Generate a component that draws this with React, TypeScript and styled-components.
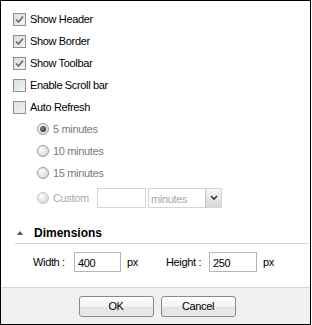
import React, { useState } from 'react';
import styled, { createGlobalStyle } from 'styled-components';

const Global = createGlobalStyle`
	html, body {
		margin: 0;
		padding: 0;
		background: #fff;
	}
	body {
		font-family: 'Liberation Sans', Arial, sans-serif;
		font-size: 11px;
		letter-spacing: -0.35px;
		color: #000;
	}
	* { box-sizing: border-box; }
`;

const Dialog = styled.div`
	width: 311px;
	height: 325px;
	border: 1px solid #000;
	display: flex;
	flex-direction: column;
	background: #fff;
`;

const Body = styled.div`
	padding: 7px 0 0 12px;
	display: flex;
	flex-direction: column;
`;

const Row = styled.label<{ $indent?: number; $h?: number; $muted?: 'gray' | 'light' }>`
	display: flex;
	align-items: center;
	height: ${p => p.$h ?? 22}px;
	padding-left: ${p => p.$indent ?? 0}px;
	color: ${p => (p.$muted === 'gray' ? '#7b7b7b' : p.$muted === 'light' ? '#a8a8a8' : '#000')};
`;

const Box = styled.span`
	width: 13px;
	height: 13px;
	border: 1px solid #8f8f8f;
	background: linear-gradient(135deg, #dcdcdc 0%, #f4f4f4 100%);
	margin-right: 4px;
	display: flex;
	align-items: center;
	justify-content: center;
`;

const Radio = styled.span<{ $on?: boolean; $faded?: boolean }>`
	width: 12px;
	height: 12px;
	border-radius: 50%;
	border: 1px solid ${p => (p.$faded ? '#c4c4c4' : '#9a9a9a')};
	background: radial-gradient(circle at 35% 35%, #ffffff 0%, #d6d6d6 80%);
	margin-right: 4px;
	display: flex;
	align-items: center;
	justify-content: center;
	&::after {
		content: '';
		display: ${p => (p.$on ? 'block' : 'none')};
		width: 6px;
		height: 6px;
		border-radius: 50%;
		background: radial-gradient(circle at 40% 40%, #8a8a8a 0%, #222 90%);
	}
`;

const TextInput = styled.input<{ $w: number }>`
	width: ${p => p.$w}px;
	height: 20px;
	border: 1px solid #b5b5b5;
	padding: 2px 3px 0;
	font: inherit;
	letter-spacing: inherit;
	color: #000;
	outline: none;
	&:disabled {
		background: #fff;
		border-color: #d4d4d4;
	}
`;

const Select = styled.div`
	margin-left: 2px;
	width: 74px;
	height: 20px;
	border: 1px solid #d4d4d4;
	display: flex;
	align-items: stretch;
	color: #a8a8a8;
`;

const SelectText = styled.span`
	flex: 1;
	display: flex;
	align-items: center;
	padding: 2px 0 0 2px;
`;

const SelectBtn = styled.span`
	width: 16px;
	border-left: 1px solid #c8c8c8;
	background: linear-gradient(#f6f6f6, #d8d8d8);
	display: flex;
	align-items: center;
	justify-content: center;
`;

const SectionHead = styled.div`
	margin: 10px 1px 0 2px;
	height: 22px;
	border-bottom: 1px solid #d6d6d6;
	display: flex;
	align-items: center;
	font-weight: bold;
	font-size: 12px;
	letter-spacing: 0;
	padding-left: 2px;
`;

const Tri = styled.span`
	width: 0;
	height: 0;
	border-left: 3px solid transparent;
	border-right: 3px solid transparent;
	border-bottom: 4px solid #555;
	margin: 0 11px 0 0;
`;

const DimRow = styled.div`
	display: flex;
	align-items: center;
	height: 20px;
	margin-top: 8px;
	padding-left: 20px;
`;

const Label = styled.span<{ $w: number }>`
	width: ${p => p.$w}px;
`;

const Unit = styled.span<{ $w: number }>`
	width: ${p => p.$w}px;
	padding-left: 6px;
`;

const Footer = styled.div`
	margin-top: auto;
	height: 37px;
	border-top: 1px solid #d4d4d4;
	background: #eff0f2;
	display: flex;
	align-items: center;
	justify-content: center;
	gap: 7px;
	padding-left: 3px;
`;

const Button = styled.button`
	width: 75px;
	height: 21px;
	border: 1px solid #8a8a8a;
	border-radius: 3px;
	background: linear-gradient(#ffffff 0%, #f3f3f3 50%, #e2e2e2 51%, #e9e9e9 100%);
	font: inherit;
	letter-spacing: inherit;
	color: #000;
	padding: 0;
`;

const Check = () => (
	<svg width="9" height="9" viewBox="0 0 9 9">
		<path d="M1 4.5 L3.5 7 L8 1.5" fill="none" stroke="#6a6a6a" strokeWidth="1.6" />
	</svg>
);

const Chevron = () => (
	<svg width="8" height="6" viewBox="0 0 8 6">
		<path d="M1 1 L4 4 L7 1" fill="none" stroke="#333" strokeWidth="1.6" />
	</svg>
);

export default function App() {
	const [opts] = useState([
		{ label: 'Show Header', on: true },
		{ label: 'Show Border', on: true },
		{ label: 'Show Toolbar', on: true },
		{ label: 'Enable Scroll bar', on: false },
		{ label: 'Auto Refresh', on: false },
	]);
	const intervals = ['5 minutes', '10 minutes', '15 minutes'];

	return (
		<>
			<Global />
			<Dialog>
				<Body>
					{opts.map(o => (
						<Row key={o.label}>
							<Box>{o.on ? <Check /> : null}</Box>
							{o.label}
						</Row>
					))}
					{intervals.map((t, i) => (
						<Row key={t} $indent={24} $muted="gray">
							<Radio $on={i === 0} />
							{t}
						</Row>
					))}
					<Row $indent={24} $h={28} $muted="light">
						<Radio $faded />
						<Label $w={44}>Custom</Label>
						<TextInput $w={49} disabled />
						<Select>
							<SelectText>minutes</SelectText>
							<SelectBtn>
								<Chevron />
							</SelectBtn>
						</Select>
					</Row>
					<SectionHead>
						<Tri />
						Dimensions
					</SectionHead>
					<DimRow>
						<Label $w={41}>Width :</Label>
						<TextInput $w={47} defaultValue="400" />
						<Unit $w={45}>px</Unit>
						<Label $w={43}>Height :</Label>
						<TextInput $w={48} defaultValue="250" />
						<Unit $w={30}>px</Unit>
					</DimRow>
				</Body>
				<Footer>
					<Button>OK</Button>
					<Button>Cancel</Button>
				</Footer>
			</Dialog>
		</>
	);
}
